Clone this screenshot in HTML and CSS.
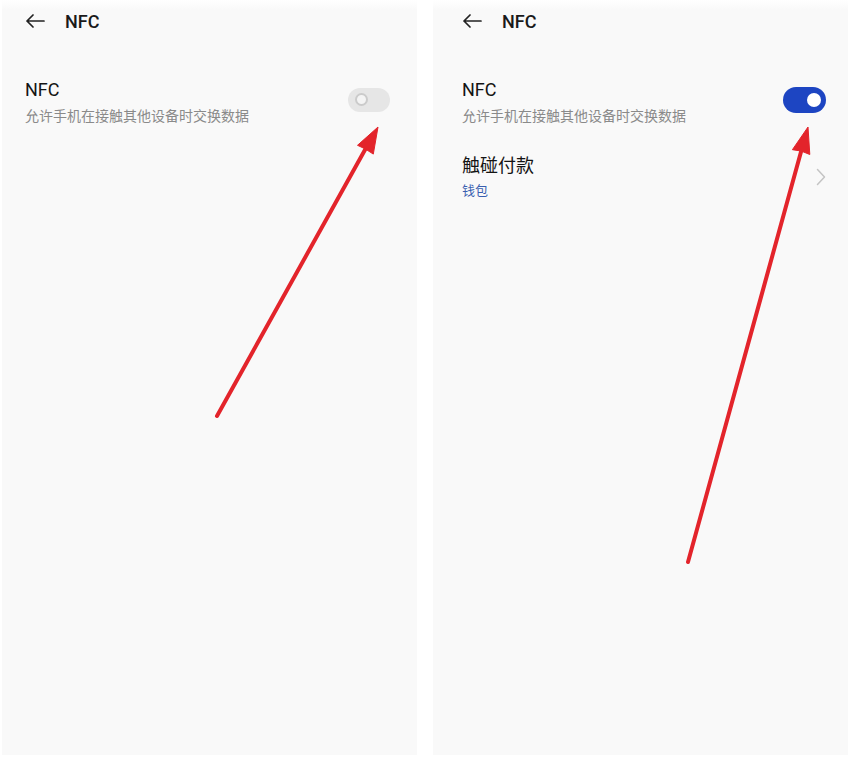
FILE: index.html
```html
<!DOCTYPE html>
<html lang="zh-CN">
<head>
<meta charset="utf-8">
<title>NFC</title>
<link rel="stylesheet" href="styles.css">
</head>
<body>
<div class="page">
  <section class="panel panel-left">
    <header class="topbar">
      <svg class="back" width="20" height="14" viewBox="0 0 20 14"><path d="M19 7H2M8 1L2 7l6 6" fill="none" stroke="#222" stroke-width="1.7" stroke-linecap="round" stroke-linejoin="round"/></svg>
      <span class="topbar-title">NFC</span>
    </header>
    <div class="row row-first">
      <div class="row-text">
        <div class="row-title">NFC</div>
        <div class="row-sub">允许手机在接触其他设备时交换数据</div>
      </div>
      <div class="switch switch-off"><span class="knob"></span></div>
    </div>
  </section>
  <section class="panel panel-right">
    <header class="topbar">
      <svg class="back" width="20" height="14" viewBox="0 0 20 14"><path d="M19 7H2M8 1L2 7l6 6" fill="none" stroke="#222" stroke-width="1.7" stroke-linecap="round" stroke-linejoin="round"/></svg>
      <span class="topbar-title">NFC</span>
    </header>
    <div class="row row-first">
      <div class="row-text">
        <div class="row-title">NFC</div>
        <div class="row-sub">允许手机在接触其他设备时交换数据</div>
      </div>
      <div class="switch switch-on"><span class="knob"></span></div>
    </div>
    <div class="row row-link">
      <div class="row-text">
        <div class="row-title big">触碰付款</div>
        <div class="row-sub link">钱包</div>
      </div>
      <svg class="chev" width="10" height="18" viewBox="0 0 10 18"><path d="M1.5 1.5L8.5 9l-7 7.5" fill="none" stroke="#c4c4c4" stroke-width="1.5" stroke-linecap="round" stroke-linejoin="round"/></svg>
    </div>
  </section>
  <svg class="arrows" width="853" height="757" viewBox="0 0 853 757">
    <g stroke="#e3242b" stroke-width="4" stroke-linecap="round" fill="#e3242b">
      <line x1="217" y1="416" x2="366" y2="148"/>
      <line x1="688" y1="562" x2="801.5" y2="150"/>
    </g>
    <g fill="#e3242b" stroke="#e3242b" stroke-width="1" stroke-linejoin="round">
      <polygon points="378,127 373.3,154.1 365.4,149 357.5,145.3"/>
      <polygon points="808,127 809.8,154.5 801.1,151 792.4,149.7"/>
    </g>
  </svg>
</div>
</body>
</html>
```

FILE: styles.css
```css
html, body {
  margin: 0;
  padding: 0;
  background: #ffffff;
}
body {
  font-family: Roboto, "Noto Sans CJK SC", sans-serif;
  color: #141414;
}
.page {
  position: relative;
  width: 853px;
  height: 757px;
  display: flex;
  gap: 16px;
  padding-left: 2px;
  box-sizing: border-box;
}
.panel {
  width: 415px;
  height: 755px;
  background: linear-gradient(#ffffff 0, #f9f9f9 10px, #f9f9f9 100%);
  box-sizing: border-box;
}
.panel-left {
  padding: 0 27px 0 23px;
}
.panel-right {
  padding: 0 22px 0 29px;
}
.topbar {
  height: 42px;
  display: flex;
  align-items: center;
  gap: 20px;
}
.back {
  display: block;
  flex: none;
}
.topbar-title {
  font-size: 18px;
  font-weight: 500;
  color: #1a1a1a;
}
.row {
  display: flex;
  align-items: flex-start;
  justify-content: space-between;
}
.row-first {
  margin-top: 36px;
}
.row-link {
  margin-top: 23px;
}
.row-title {
  font-size: 18px;
  line-height: 24px;
  color: #141414;
}
.row-title.big {
  font-size: 18px;
  line-height: 26px;
}
.row-sub {
  font-size: 14px;
  line-height: 28px;
  color: #8a8a8a;
}
.row-sub.link {
  font-size: 13px;
  line-height: 24px;
  color: #3a5fb0;
}
.switch {
  width: 42px;
  height: 24px;
  border-radius: 12px;
  position: relative;
  flex: none;
  margin-top: 10px;
}
.switch-off {
  background: #e6e6e6;
}
.switch-off .knob {
  position: absolute;
  left: 6.5px;
  top: 5px;
  width: 9px;
  height: 9px;
  border: 2.5px solid #cbcbcb;
  border-radius: 50%;
  background: #f4f4f4;
}
.switch-on {
  width: 43px;
  height: 26px;
  border-radius: 13px;
  background: #1d45c2;
  margin-top: 9px;
}
.switch-on .knob {
  position: absolute;
  right: 5px;
  top: 6px;
  width: 14px;
  height: 14px;
  border-radius: 50%;
  background: #ffffff;
}
.chev {
  display: block;
  margin-top: 15px;
}
.arrows {
  position: absolute;
  left: 0;
  top: 0;
  pointer-events: none;
}
```
